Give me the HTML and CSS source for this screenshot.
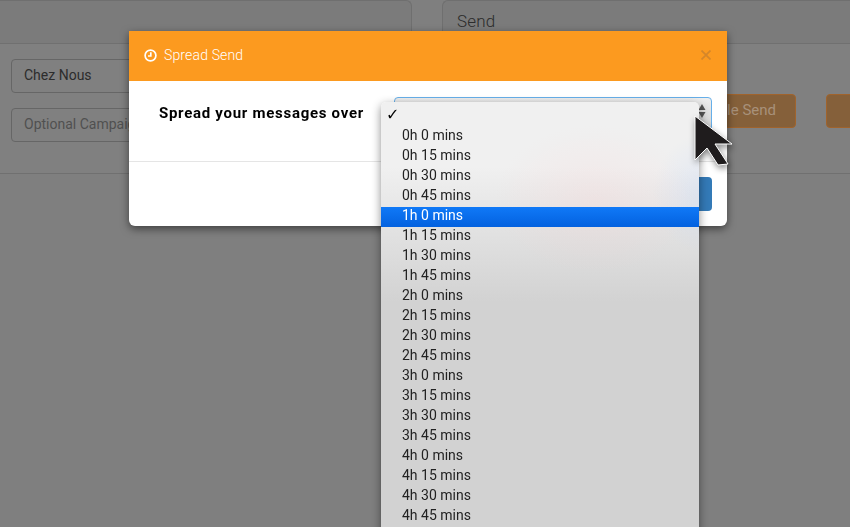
FILE: index.html
```html
<!DOCTYPE html>
<html lang="en">
<head>
<meta charset="utf-8">
<title>Spread Send</title>
<link rel="stylesheet" href="styles.css">
</head>
<body>
<div class="page">
  <div class="panel-heads">
    <div class="panel-head"></div>
    <div class="panel-head panel-head-right"><span class="send-title">Send</span></div>
  </div>
  <div class="form">
    <div class="inputs">
      <div class="field">Chez Nous</div>
      <div class="field field-empty">Optional Campaign Name</div>
    </div>
    <div class="actions">
      <div class="btn-bg">Schedule Send</div>
      <div class="btn-bg btn-bg-next"></div>
    </div>
  </div>
</div>
<div class="overlay">
  <div class="modal">
    <div class="modal-head">
      <svg class="clock" viewBox="0 0 13 13" aria-hidden="true"><circle cx="6.5" cy="6.5" r="5.4"/><path d="M6.8 3.2v3.8H4"/></svg>
      <span class="modal-title">Spread Send</span>
      <svg class="close" viewBox="0 0 10 10" aria-hidden="true"><path d="M.5.5l9 9M9.5.5l-9 9"/></svg>
    </div>
    <div class="modal-body">
      <label class="modal-label">Spread your messages over</label>
      <div class="select">
        <svg class="arrows" viewBox="0 0 8 16" aria-hidden="true"><path d="M4 1l3.5 6h-7z"/><path d="M4 15l3.5-6h-7z"/></svg>
      </div>
    </div>
    <div class="modal-foot"><div class="btn-primary"></div></div>
    <div class="dropdown">
      <div class="opt opt-check">✓</div>
      <div class="opt">0h 0 mins</div>
      <div class="opt">0h 15 mins</div>
      <div class="opt">0h 30 mins</div>
      <div class="opt">0h 45 mins</div>
      <div class="opt opt-sel">1h 0 mins</div>
      <div class="opt">1h 15 mins</div>
      <div class="opt">1h 30 mins</div>
      <div class="opt">1h 45 mins</div>
      <div class="opt">2h 0 mins</div>
      <div class="opt">2h 15 mins</div>
      <div class="opt">2h 30 mins</div>
      <div class="opt">2h 45 mins</div>
      <div class="opt">3h 0 mins</div>
      <div class="opt">3h 15 mins</div>
      <div class="opt">3h 30 mins</div>
      <div class="opt">3h 45 mins</div>
      <div class="opt">4h 0 mins</div>
      <div class="opt">4h 15 mins</div>
      <div class="opt">4h 30 mins</div>
      <div class="opt">4h 45 mins</div>
    </div>
  </div>
  <svg class="cursor" viewBox="0 0 44 54" aria-hidden="true"><path d="M1 1V45L13 33 24 50 34 49 21 29H38Z"/></svg>
</div>
</body>
</html>
```
FILE: styles.css
```css
html, body {
  margin: 0;
  height: 527px;
  overflow: hidden;
  background: #7f7f7f;
  font-family: "Roboto", "Liberation Sans", sans-serif;
  font-size: 14px;
  color: #2c2c2c;
}
.page { height: 527px; overflow: hidden; }
.panel-heads {
  display: grid;
  grid-template-columns: 412px 1fr;
  column-gap: 30px;
  height: 43px;
}
.panel-head {
  background: #7b7b7b;
  border: 1px solid #6f6f6f;
  border-left: 0;
  border-bottom: 0;
  border-top-right-radius: 6px;
}
.panel-head-right {
  border-left: 1px solid #6f6f6f;
  border-right: 0;
  border-top-left-radius: 6px;
  border-top-right-radius: 0;
  padding: 10px 14px 0;
}
.send-title { font-size: 17px; line-height: 20px; font-weight: 300; letter-spacing: .2px; }
.form {
  display: flex;
  box-sizing: border-box;
  height: 131px;
  border-top: 1px solid #707070;
  border-bottom: 1px solid #707070;
  padding: 15px 0 0 11px;
  background: #808080;
}
.inputs { display: flex; flex: none; flex-direction: column; gap: 15px; width: 300px; }
.field {
  height: 32px;
  border: 1px solid #666;
  border-radius: 4px;
  padding: 0 12px;
  line-height: 30px;
}
.field-empty { color: #505050; }
.actions { display: flex; flex: none; gap: 30px; margin: 35px 0 0 325px; height: 34px; }
.btn-bg {
  box-sizing: border-box;
  width: 160px;
  height: 34px;
  background: #85603a;
  border: 1px solid #a0632c;
  border-radius: 4px;
  color: #a8917a;
  font-size: 15px;
  line-height: 30px;
  text-align: right;
  padding-right: 19px;
}
.btn-bg-next { width: 122px; }
.overlay { position: fixed; inset: 0; }
.modal {
  position: absolute;
  left: 129px;
  top: 31px;
  width: 598px;
  background: #fff;
  border-radius: 0 0 6px 6px;
  box-shadow: 0 3px 9px rgba(0,0,0,.5);
}
.modal-head {
  display: flex;
  align-items: center;
  height: 50px;
  box-sizing: border-box;
  padding: 0 16px 2px 15px;
  background: #fc9a1f;
  color: #fff;
}
.clock { width: 13px; height: 13px; fill: none; stroke: #fff; stroke-width: 1.7; margin-right: 7px; }
.modal-title { flex: 1; font-size: 14px; letter-spacing: .15px; font-weight: 300; }
.close { width: 10px; height: 10px; fill: none; stroke: #d4862a; stroke-width: 1.7; }
.modal-body {
  display: flex;
  height: 81px;
  box-sizing: border-box;
  border-bottom: 1px solid #e5e5e5;
  padding: 16px 15px 0 30px;
}
.modal-label { width: 235px; font-size: 15px; font-weight: 700; color: #000; line-height: 32px; letter-spacing: .72px; }
.select {
  position: relative;
  width: 318px;
  height: 34px;
  box-sizing: border-box;
  border: 1px solid #66afe9;
  border-radius: 4px;
  background: linear-gradient(#efefef, #cfcfcf);
}
.arrows { position: absolute; right: 5px; top: 5px; width: 8px; height: 16px; fill: #555; }
.modal-foot { display: flex; justify-content: flex-end; height: 64px; padding: 15px 15px 0; box-sizing: border-box; }
.btn-primary { width: 120px; height: 34px; background: #337ab7; border-radius: 4px; }
.dropdown {
  position: absolute;
  left: 252px;
  top: 71px;
  width: 318px;
  height: 480px;
  box-sizing: border-box;
  padding-top: 5px;
  border-radius: 5px 5px 0 0;
  background:
    radial-gradient(ellipse 100px 75px at 214px 98px, rgba(255,195,195,.18), transparent),
    radial-gradient(ellipse 50px 60px at 322px 92px, rgba(170,200,255,.22), transparent),
    linear-gradient(#f0f0f0 0, #f0f0f0 65px, #d2d2d2 200px);
  box-shadow: 0 3px 10px rgba(0,0,0,.45);
  color: #222;
}
.opt { height: 20px; line-height: 16px; padding-left: 21px; }
.opt-check { padding-left: 5px; color: #000; font-family: "DejaVu Sans", sans-serif; font-size: 16px; font-weight: 700; }
.opt-sel { background: linear-gradient(#1079f7, #0361df); color: #fff; }
.cursor {
  position: absolute;
  left: 694px;
  top: 115px;
  width: 44px;
  height: 54px;
  fill: #1f1c1d;
  stroke: #fff;
  stroke-width: 1;
  filter: drop-shadow(1px 3px 3px rgba(0,0,0,.45));
}
```
